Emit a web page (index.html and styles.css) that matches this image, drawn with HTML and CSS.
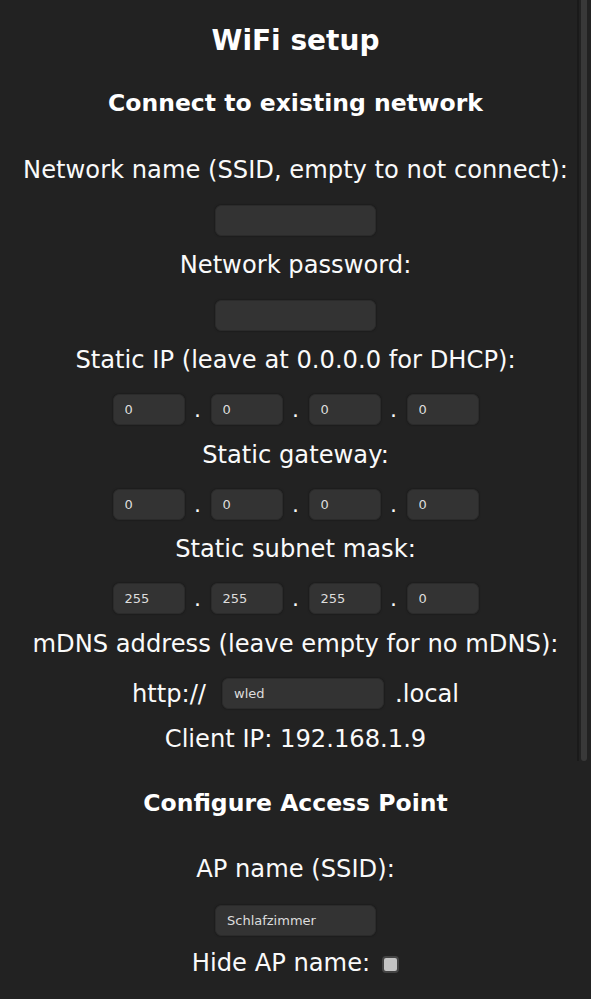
FILE: index.html
```html
<!DOCTYPE html>
<html lang="en">
<head>
  <meta charset="UTF-8">
  <meta name="viewport" content="width=device-width, initial-scale=1.0">
  <title>WiFi setup</title>
  <link rel="stylesheet" href="styles.css">
</head>
<body>

  <form class="settings">
    <h2>WiFi setup</h2>

    <!-- Client settings -->
    <h3>Connect to existing network</h3>
    <label class="field-label" for="cs">Network name (SSID, empty to not connect):</label>
    <input class="text-input" type="text" id="cs">

    <label class="field-label" for="cp">Network password:</label>
    <input class="text-input" type="password" id="cp">

    <label class="field-label">Static IP (leave at 0.0.0.0 for DHCP):</label>
    <div class="ip-row">
      <input class="ip-input" type="number" value="0"><span class="dot">.</span>
      <input class="ip-input" type="number" value="0"><span class="dot">.</span>
      <input class="ip-input" type="number" value="0"><span class="dot">.</span>
      <input class="ip-input" type="number" value="0">
    </div>

    <label class="field-label">Static gateway:</label>
    <div class="ip-row">
      <input class="ip-input" type="number" value="0"><span class="dot">.</span>
      <input class="ip-input" type="number" value="0"><span class="dot">.</span>
      <input class="ip-input" type="number" value="0"><span class="dot">.</span>
      <input class="ip-input" type="number" value="0">
    </div>

    <label class="field-label">Static subnet mask:</label>
    <div class="ip-row">
      <input class="ip-input" type="number" value="255"><span class="dot">.</span>
      <input class="ip-input" type="number" value="255"><span class="dot">.</span>
      <input class="ip-input" type="number" value="255"><span class="dot">.</span>
      <input class="ip-input" type="number" value="0">
    </div>

    <label class="field-label" for="cm">mDNS address (leave empty for no mDNS):</label>
    <div class="mdns-row">
      <span>http://</span>
      <input class="text-input" type="text" id="cm" value="wled">
      <span>.local</span>
    </div>

    <div class="client-ip">Client IP: 192.168.1.9</div>

    <!-- Access point settings -->
    <h3 class="ap-title">Configure Access Point</h3>
    <label class="field-label ap-label" for="as">AP name (SSID):</label>
    <input class="text-input" type="text" id="as" value="Schlafzimmer">

    <div class="hide-row">
      <label for="ah">Hide AP name:</label>
      <input class="check" type="checkbox" id="ah">
    </div>
  </form>

  <!-- browser scrollbar drawn over the page -->
  <div class="scroll-track"></div>
  <div class="scroll-thumb"></div>

</body>
</html>
```

FILE: styles.css
```css
/* Base */
html, body {
  height: 100%;
  overflow: hidden;
}

body {
  margin: 0;
  background: #222;
  color: #fff;
  font-family: "DejaVu Sans", Verdana, sans-serif;
  text-align: center;
}

.settings {
  display: flex;
  flex-direction: column;
  align-items: center;
}

h2 {
  margin: 24px 0 0;
  font-size: 28px;
  line-height: 34px;
  font-weight: bold;
}

h3 {
  margin: 30px 0 0;
  font-size: 23.5px;
  line-height: 30px;
  font-weight: bold;
}

.field-label {
  display: block;
  margin-top: 37px;
  font-size: 24.2px;
  line-height: 30px;
  color: #fafafa;
  white-space: nowrap;
}

/* labels after an input sit 14px under it */
.text-input + .field-label {
  margin-top: 14px;
}

.ip-row + .field-label {
  margin-top: 14.5px;
}

/* Inputs */
.text-input,
.ip-input {
  box-sizing: border-box;
  height: 31px;
  margin: 20px 0 0;
  padding: 0 11px;
  background: #333;
  color: #ddd;
  border: 1px solid #2b2b2b;
  border-radius: 6px;
  box-shadow: 0 0 2px rgba(0, 0, 0, 0.5);
  font-family: "DejaVu Sans", Verdana, sans-serif;
  font-size: 13px;
  outline: none;
}

.text-input {
  width: 161px;
}

.ip-input {
  width: 72px;
  margin: 0;
  -moz-appearance: textfield;
}

.ip-input::-webkit-inner-spin-button,
.ip-input::-webkit-outer-spin-button {
  -webkit-appearance: none;
  margin: 0;
}

.ip-row {
  display: flex;
  align-items: center;
  height: 31px;
  margin-top: 19px;
}

.dot {
  width: 26px;
  font-size: 22px;
  line-height: 31px;
  color: #fafafa;
}

/* mDNS */
.mdns-row {
  display: flex;
  align-items: center;
  height: 31px;
  margin-top: 19.5px;
  font-size: 24.2px;
  color: #fafafa;
}

.mdns-row .text-input {
  width: 162px;
  margin: 0 11px 0 16px;
}

.client-ip {
  margin-top: 15px;
  font-size: 24.2px;
  line-height: 30px;
  color: #fafafa;
}

.ap-title {
  margin-top: 34px;
}

.settings .ap-label {
  margin-top: 36px;
}

.ap-label + .text-input {
  margin-top: 21px;
}

/* Hide AP checkbox */
.hide-row {
  display: flex;
  align-items: center;
  margin-top: 12px;
  font-size: 24.2px;
  line-height: 30px;
  color: #fafafa;
}

.check {
  -webkit-appearance: none;
  appearance: none;
  box-sizing: border-box;
  width: 17px;
  height: 17px;
  margin: 2px 0 0 12px;
  background: #c4c4c4;
  border: 2px solid #444;
  border-radius: 4px;
}

/* Scrollbar overlay */
.scroll-track {
  position: fixed;
  top: 0;
  right: 12px;
  width: 2px;
  height: 761px;
  background: #1a1a1a;
}

.scroll-thumb {
  position: fixed;
  top: 0;
  right: 4px;
  width: 6px;
  height: 761px;
  background: #393939;
  border-radius: 0 0 3px 3px;
}
```
